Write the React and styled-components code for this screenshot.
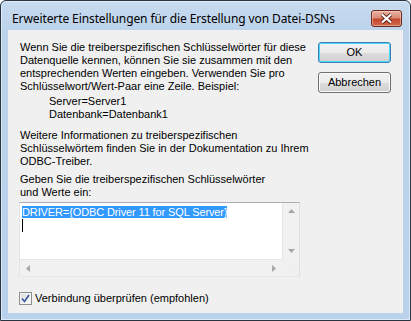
import React from "react";
import styled, { createGlobalStyle } from "styled-components";

const GlobalStyle = createGlobalStyle`
  html, body {
    margin: 0;
    padding: 0;
    background: #ffffff;
  }
  * {
    box-sizing: border-box;
  }
`;

const Window = styled.div`
  display: flex;
  flex-direction: column;
  width: 411px;
  height: 321px;
  border: 1px solid #2a3440;
  border-radius: 6px 6px 0 0;
  background: linear-gradient(#c8dbef 0px, #bcd3eb 30px, #b9d1ea 100%);
  box-shadow: inset 0 0 0 1px rgba(235, 245, 255, 0.7);
  padding: 0 7px 7px;
`;

const TitleBar = styled.div`
  display: flex;
  align-items: flex-start;
  justify-content: space-between;
  height: 29px;
  padding: 0 1px 0 4px;
`;

const Title = styled.span`
  font-family: "Noto Sans", "DejaVu Sans", sans-serif;
  font-size: 12px;
  line-height: 16px;
  margin-top: 10px;
  color: #000;
  letter-spacing: -0.1px;
`;

const CloseButton = styled.div`
  display: flex;
  align-items: center;
  justify-content: center;
  width: 31px;
  height: 17px;
  margin-top: 9px;
  border: 1px solid #6d2a1e;
  border-radius: 3px;
  background: linear-gradient(#eab2a3 0%, #d98b76 45%, #c4462c 55%, #cf6a4f 100%);
  box-shadow: inset 0 0 0 1px rgba(255, 220, 210, 0.45);
`;

const Client = styled.div`
  flex: 1;
  display: flex;
  background: #f0f0f0;
  padding: 11px 0 0 11px;
  font-family: "Liberation Sans", Arial, sans-serif;
  font-size: 11px;
  line-height: 13px;
  color: #000;
`;

const LeftColumn = styled.div`
  display: flex;
  flex-direction: column;
  width: 281px;
`;

const Label = styled.p`
  margin: ${(p) => p.$mt || 0}px 0 0;
  padding-left: ${(p) => (p.$indent ? 30 : 1)}px;
  white-space: nowrap;
`;

const TextBox = styled.div`
  display: grid;
  grid-template-columns: 1fr 17px;
  grid-template-rows: 1fr 17px;
  height: 75px;
  margin-top: 3px;
  background: #fff;
  border: 1px solid;
  border-color: #abadb3 #dbdfe6 #e3e9ef #e2e3ea;
`;

const Content = styled.div`
  padding: 3px 0 0 2px;
  white-space: nowrap;
  overflow: hidden;
`;

const Selected = styled.span`
  background: #3399ff;
  color: #fff;
  letter-spacing: -0.12px;
`;

const Caret = styled.span`
  display: inline-block;
  width: 1px;
  height: 13px;
  background: #000;
  vertical-align: top;
`;

const ScrollBar = styled.div`
  display: flex;
  flex-direction: ${(p) => (p.$vertical ? "column" : "row")};
  align-items: center;
  justify-content: space-between;
  background: #f1f1f1;
  border-${(p) => (p.$vertical ? "left" : "top")}: 1px solid #e6e6e6;
  padding: ${(p) => (p.$vertical ? "6px 0 6px" : "0 6px")};
`;

const Corner = styled.div`
  background: #f0f0f0;
`;

const CheckRow = styled.label`
  display: flex;
  align-items: center;
  gap: 3px;
  margin-top: 15px;
`;

const CheckBox = styled.span`
  display: flex;
  align-items: center;
  justify-content: center;
  width: 13px;
  height: 13px;
  border: 1px solid #8e8f8f;
  background: linear-gradient(135deg, #dcdcdc, #fbfbfb);
  box-shadow: inset 0 0 0 1px #f4f4f4;
`;

const RightColumn = styled.div`
  display: flex;
  flex-direction: column;
  gap: 9px;
  margin-left: 18px;
  padding-top: 1px;
`;

const Button = styled.div`
  display: flex;
  align-items: center;
  justify-content: center;
  width: 73px;
  height: 21px;
  border: 1px solid ${(p) => (p.$default ? "#3c7fb1" : "#707070")};
  border-radius: 3px;
  background: linear-gradient(#f2f2f2 0%, #ebebeb 50%, #dddddd 51%, #cfcfcf 100%);
  box-shadow: inset 0 0 0 1px ${(p) => (p.$default ? "#48d8fb" : "#fbfbfb")};
`;

const UpArrow = () => (
  <svg width="7" height="4" viewBox="0 0 7 4">
    <polygon points="3.5,0 7,4 0,4" fill="#a7a7a7" />
  </svg>
);

const DownArrow = () => (
  <svg width="7" height="4" viewBox="0 0 7 4">
    <polygon points="0,0 7,0 3.5,4" fill="#a7a7a7" />
  </svg>
);

const LeftArrow = () => (
  <svg width="4" height="7" viewBox="0 0 4 7">
    <polygon points="4,0 4,7 0,3.5" fill="#a7a7a7" />
  </svg>
);

const RightArrow = () => (
  <svg width="4" height="7" viewBox="0 0 4 7">
    <polygon points="0,0 4,3.5 0,7" fill="#a7a7a7" />
  </svg>
);

export default function App() {
  return (
    <>
      <GlobalStyle />
      <Window>
        <TitleBar>
          <Title>Erweiterte Einstellungen für die Erstellung von Datei-DSNs</Title>
          <CloseButton>
            <svg width="13" height="11" viewBox="0 0 13 11">
              <path
                d="M2 1.5 L6.5 5.5 L11 1.5 M2 9.5 L6.5 5.5 L11 9.5"
                stroke="#5a2418"
                strokeWidth="4"
                fill="none"
              />
              <path
                d="M2 1.5 L6.5 5.5 L11 1.5 M2 9.5 L6.5 5.5 L11 9.5"
                stroke="#ffffff"
                strokeWidth="2.2"
                fill="none"
              />
            </svg>
          </CloseButton>
        </TitleBar>
        <Client>
          <LeftColumn>
            <Label>
              Wenn Sie die treiberspezifischen Schlüsselwörter für diese
              <br />
              Datenquelle kennen, können Sie sie zusammen mit den
              <br />
              entsprechenden Werten eingeben. Verwenden Sie pro
              <br />
              Schlüsselwort/Wert-Paar eine Zeile. Beispiel:
            </Label>
            <Label $indent $mt={2}>
              Server=Server1
              <br />
              Datenbank=Datenbank1
            </Label>
            <Label $mt={8}>
              Weitere Informationen zu treiberspezifischen
              <br />
              Schlüsselwörtem finden Sie in der Dokumentation zu Ihrem
              <br />
              ODBC-Treiber.
            </Label>
            <Label $mt={5}>
              Geben Sie die treiberspezifischen Schlüsselwörter
              <br />
              und Werte ein:
            </Label>
            <TextBox>
              <Content>
                <Selected>DRIVER={"{"}ODBC Driver 11 for SQL Server{"}"}</Selected>
                <br />
                <Caret />
              </Content>
              <ScrollBar $vertical>
                <UpArrow />
                <DownArrow />
              </ScrollBar>
              <ScrollBar>
                <LeftArrow />
                <RightArrow />
              </ScrollBar>
              <Corner />
            </TextBox>
            <CheckRow>
              <CheckBox>
                <svg width="9" height="9" viewBox="0 0 9 9">
                  <path
                    d="M1 4.5 L3.5 7.5 L8 1"
                    stroke="#3b58a0"
                    strokeWidth="1.6"
                    fill="none"
                  />
                </svg>
              </CheckBox>
              Verbindung überprüfen (empfohlen)
            </CheckRow>
          </LeftColumn>
          <RightColumn>
            <Button $default>OK</Button>
            <Button>Abbrechen</Button>
          </RightColumn>
        </Client>
      </Window>
    </>
  );
}
